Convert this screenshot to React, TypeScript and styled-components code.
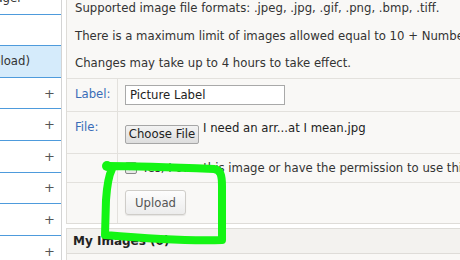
import React from "react";
import styled, { createGlobalStyle } from "styled-components";

const GlobalStyle = createGlobalStyle`
  html, body {
    margin: 0;
    padding: 0;
    background: #ffffff;
  }
  body {
    font-family: "DejaVu Sans", Verdana, sans-serif;
    font-size: 11.7px;
    color: #333;
  }
`;

const sideItems = [
  { text: "Manager", active: false, plus: false, first: true },
  { text: "", active: false, plus: false },
  { text: "Images (Upload)", active: true, plus: false },
  { text: "", active: false, plus: true },
  { text: "", active: false, plus: true },
  { text: "", active: false, plus: true },
  { text: "", active: false, plus: true },
  { text: "", active: false, plus: true },
  { text: "", active: false, plus: true },
];

export default function App() {
  return (
    <>
      <GlobalStyle />
      <Page>
        <Sidebar>
          <SideList>
            {sideItems.map((item, i) => (
              <SideItem key={i} $active={item.active} $first={item.first}>
                <SideText>{item.text}</SideText>
                {item.plus && <Plus>+</Plus>}
              </SideItem>
            ))}
          </SideList>
        </Sidebar>

        <Main>
          <Panel>
            <Note>Supported image file formats: .jpeg, .jpg, .gif, .png, .bmp, .tiff.</Note>
            <Note>
              There is a maximum limit of images allowed equal to 10 + Number of
              purchased items.
            </Note>
            <Note>Changes may take up to 4 hours to take effect.</Note>

            <Form>
              <Row $height={33}>
                <LabelCell>Label:</LabelCell>
                <ValueCell>
                  <TextInput defaultValue="Picture Label" />
                </ValueCell>
              </Row>
              <Row $height={42}>
                <LabelCell>File:</LabelCell>
                <ValueCell>
                  <FileButton>Choose File</FileButton>
                  <FileName>I need an arr...at I mean.jpg</FileName>
                </ValueCell>
              </Row>
              <Row $height={29}>
                <LabelCell />
                <ValueCell $center>
                  <Check>✓</Check>
                  <CheckText>
                    Yes, I own this image or have the permission to use this image.
                  </CheckText>
                </ValueCell>
              </Row>
              <Row $height={40} $last>
                <LabelCell />
                <ValueCell $center>
                  <UploadButton>Upload</UploadButton>
                </ValueCell>
              </Row>
            </Form>
          </Panel>

          <SectionHead>My Images (0)</SectionHead>
          <SectionBody />
        </Main>

        <Scribble viewBox="0 0 460 260" width="460" height="260">
          <path
            d="M108 166 C 140 166, 190 168, 214 169 C 221 170, 222 176, 222 186 L 222 240 C 190 241, 140 238, 105 235 L 106 200 C 107 185, 109 175, 112 169"
            fill="none"
            stroke="#14f514"
            strokeWidth="8"
            strokeLinecap="round"
            strokeLinejoin="round"
          />
          <circle cx="107" cy="166" r="5" fill="#14f514" />
        </Scribble>
      </Page>
    </>
  );
}

const Page = styled.div`
  position: relative;
  display: flex;
  width: 460px;
  height: 260px;
  overflow: hidden;
  background: #ffffff;
`;

const Sidebar = styled.div`
  flex: 0 0 61px;
  border-right: 1px solid #d4d4d4;
  overflow: hidden;
`;

const SideList = styled.div`
  margin-top: -17px;
`;

const SideItem = styled.div<{ $active?: boolean; $first?: boolean }>`
  display: flex;
  align-items: center;
  justify-content: flex-end;
  height: 30.6px;
  border-bottom: 1px solid #4e9bdc;
  background: ${(p) => (p.$active ? "#d5ebfb" : "#ffffff")};
  padding-right: ${(p) => (p.$active ? "31px" : p.$first ? "39px" : "6px")};
  overflow: hidden;
  color: #333;
  font-size: 11.7px;
`;

const SideText = styled.span`
  white-space: nowrap;
  flex-shrink: 0;
`;

const Plus = styled.span`
  font-size: 13px;
  color: #555;
`;

const Main = styled.div`
  flex: 1;
  min-width: 0;
  margin-left: 4px;
  display: flex;
  flex-direction: column;
`;

const Panel = styled.div`
  background: #f9f8f6;
  border-left: 1px solid #dedcd8;
  border-bottom: 1px solid #dedcd8;
  padding-top: 1px;
`;

const Note = styled.p`
  margin: 0;
  padding: 0 0 0 8px;
  height: 27.5px;
  line-height: 15px;
  white-space: nowrap;
  color: #333;
`;

const Form = styled.div`
  border-top: 1px solid #e3e1dd;
  margin-top: -6px;
`;

const Row = styled.div<{ $height: number; $last?: boolean }>`
  display: flex;
  height: ${(p) => p.$height}px;
  border-bottom: ${(p) => (p.$last ? "none" : "1px solid #e3e1dd")};
  box-sizing: border-box;
`;

const LabelCell = styled.div`
  flex: 0 0 51px;
  box-sizing: border-box;
  padding: 8px 0 0 8px;
  color: #3a6db8;
  border-right: 1px solid #e3e1dd;
`;

const ValueCell = styled.div<{ $center?: boolean }>`
  flex: 1;
  display: flex;
  align-items: ${(p) => (p.$center ? "center" : "flex-start")};
  padding: ${(p) => (p.$center ? "0 0 0 7px" : "6px 0 0 7px")};
  white-space: nowrap;
`;

const TextInput = styled.input`
  width: 160px;
  height: 20px;
  box-sizing: border-box;
  border: 1px solid #a9a9a9;
  padding: 0 4px;
  font-family: "DejaVu Sans", Verdana, sans-serif;
  font-size: 11.7px;
  color: #222;
  background: #fff;
  outline: none;
`;

const FileButton = styled.button`
  margin-top: 7px;
  width: 74px;
  height: 19px;
  box-sizing: border-box;
  border: 1px solid #a6a6a6;
  border-radius: 2px;
  background: linear-gradient(#f3f3f3, #dddddd);
  font-family: "DejaVu Sans", Verdana, sans-serif;
  font-size: 11.7px;
  color: #222;
  padding: 0;
`;

const FileName = styled.span`
  margin: 3px 0 0 4px;
  color: #222;
`;

const Check = styled.span`
  display: inline-flex;
  align-items: center;
  justify-content: center;
  width: 10px;
  height: 10px;
  border: 1px solid #888;
  border-radius: 2px;
  background: #e8e8e8;
  font-size: 9px;
  color: #333;
  margin-right: 5px;
`;

const CheckText = styled.span`
  color: #333;
`;

const UploadButton = styled.button`
  width: 61px;
  height: 25px;
  box-sizing: border-box;
  border: 1px solid #cfcdc9;
  border-radius: 3px;
  background: linear-gradient(#fdfdfd, #ececec);
  box-shadow: 0 1px 1px rgba(0, 0, 0, 0.08);
  font-family: "DejaVu Sans", Verdana, sans-serif;
  font-size: 11.7px;
  color: #555;
  padding: 0;
`;

const SectionHead = styled.div`
  margin-top: 4px;
  height: 26px;
  box-sizing: border-box;
  border: 1px solid #dedcd8;
  border-right: none;
  background: #f3f2ef;
  padding: 0 6px;
  display: flex;
  align-items: center;
  font-weight: bold;
  font-size: 12px;
  color: #222;
`;

const SectionBody = styled.div`
  flex: 1;
  border-left: 1px solid #dedcd8;
  background: #f9f8f6;
`;

const Scribble = styled.svg`
  position: absolute;
  left: 0;
  top: 0;
  pointer-events: none;
`;
